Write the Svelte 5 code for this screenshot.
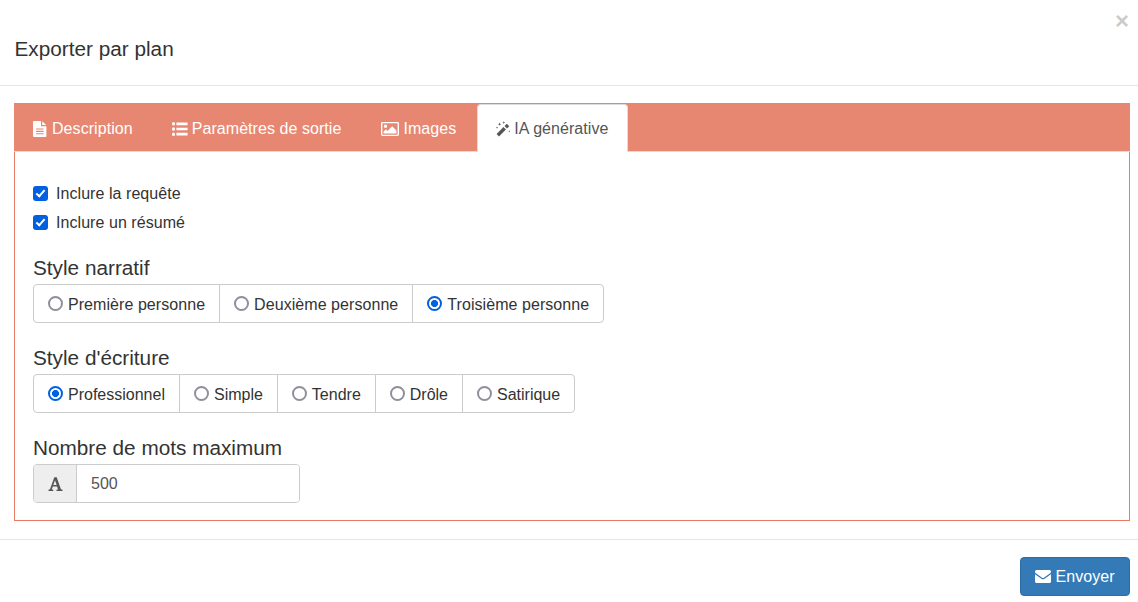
<script>
  const narrative = [
    { label: "Première personne", checked: false },
    { label: "Deuxième personne", checked: false },
    { label: "Troisième personne", checked: true },
  ];
  const writing = [
    { label: "Professionnel", checked: true },
    { label: "Simple", checked: false },
    { label: "Tendre", checked: false },
    { label: "Drôle", checked: false },
    { label: "Satirique", checked: false },
  ];
</script>

<div class="modal">
  <header class="modal-header">
    <span class="close">×</span>
    <h4>Exporter par plan</h4>
  </header>

  <section class="modal-body">
    <nav class="tabs">
      <span class="tab first-tab">
        <svg class="ico" width="14" height="16" viewBox="0 0 14 16">
          <path fill="currentColor" fill-rule="evenodd" d="M1 0h7v5.200h5.400V15a1 1 0 0 1-1 1H1a1 1 0 0 1-1-1V1a1 1 0 0 1 1-1zM9.200 0.300l4 3.800H9.200zM3 7.400v1.100h7.600V7.400zM3 9.800v1.100h7.600V9.800zM3 12.200v1.100h7.600v-1.100z"/>
        </svg>
        Description
      </span>
      <span class="tab">
        <svg class="ico" width="16" height="14" viewBox="0 0 16 14">
          <path fill="currentColor" d="M0 1.500a1.500 1.500 0 0 1 3 0v.4a1.500 1.500 0 0 1-3 0zM0 6.800a1.500 1.500 0 0 1 3 0v.4a1.500 1.500 0 0 1-3 0zM0 12.100a1.500 1.500 0 0 1 3 0v.4a1.500 1.500 0 0 1-3 0zM4.400.6h11.200v2.600H4.400zM4.400 5.700h11.200v2.600H4.400zM4.400 10.800h11.200v2.600H4.400z"/>
        </svg>
        Paramètres de sortie
      </span>
      <span class="tab">
        <svg class="ico" width="18" height="14" viewBox="0 0 18 14">
          <path fill="currentColor" fill-rule="evenodd" d="M1.400 0h15.200A1.400 1.400 0 0 1 18 1.400v11.200a1.400 1.400 0 0 1-1.400 1.400H1.400A1.400 1.400 0 0 1 0 12.600V1.400A1.400 1.400 0 0 1 1.400 0zM1.400 1.200v11.600h15.200V1.200zM4.500 2.600a1.700 1.700 0 1 1 0 3.400 1.700 1.700 0 0 1 0-3.400zM2.600 11.400V9.600l2.300-2.300 1.600 1.600 4.700-4.700 4.200 4.200v3z"/>
        </svg>
        Images
      </span>
      <span class="tab active">
        <svg class="ico" width="16" height="16" viewBox="0 0 16 16">
          <path stroke="currentColor" stroke-width="3.400" d="M2.800 14.200L9.700 7.300"/>
          <path stroke="currentColor" stroke-width="3.400" d="M10.800 6.200L13 4"/>
          <path fill="currentColor" d="M4.600 1.600l.5 1.100 1.100.5-1.100.5-.5 1.100-.5-1.100-1.100-.5 1.100-.5zM8.800.2l.4 1 1 .4-1 .4-.4 1-.4-1-1-.4 1-.4zM2 5.500l.3.800.8.300-.8.300-.3.800-.3-.8-.8-.3.800-.3zM14.300 9.200l.3.800.8.300-.8.300-.3.800-.3-.8-.8-.3.800-.3z"/>
        </svg>
        IA générative
      </span>
    </nav>

    <div class="tab-content">
      <label class="check"><input type="checkbox" checked /> Inclure la requête</label>
      <label class="check"><input type="checkbox" checked /> Inclure un résumé</label>

      <div class="group first">
        <div class="group-title">Style narratif</div>
        <div class="radio-group">
          {#each narrative as item}
            <label class="radio"><input type="radio" name="narrative" checked={item.checked} /> {item.label}</label>
          {/each}
        </div>
      </div>

      <div class="group">
        <div class="group-title">Style d'écriture</div>
        <div class="radio-group tight">
          {#each writing as item}
            <label class="radio"><input type="radio" name="writing" checked={item.checked} /> {item.label}</label>
          {/each}
        </div>
      </div>

      <div class="group">
        <div class="group-title">Nombre de mots maximum</div>
        <div class="input-group">
          <span class="addon">
            <svg width="15" height="14" viewBox="0 0 15 14">
              <path fill="#555" fill-rule="evenodd" d="M6.300.3h2.400l4.200 12 1.600.5V14H8.500V12.800l1.500-.4-.9-2.800H4.800l-1 2.800 1.500.4V14H.5V12.800l1.500-.5zM7 3.300L5.300 8.100h3.400z"/>
            </svg>
          </span>
          <input class="text" type="text" value="500" />
        </div>
      </div>
    </div>
  </section>

  <footer class="modal-footer">
    <button class="send">
      <svg width="16" height="13" viewBox="0 0 16 13">
        <path fill="currentColor" d="M1.500 0h13A1.500 1.500 0 0 1 16 1.500c0 .9-.6 1.600-1.200 2.100L8.900 7.700a1.600 1.600 0 0 1-1.800 0L1.200 3.600C.6 3.100 0 2.400 0 1.500A1.500 1.500 0 0 1 1.500 0zM0 4.200l6.400 4.500c1 .7 2.200.7 3.200 0L16 4.200v7.300a1.500 1.500 0 0 1-1.500 1.500h-13A1.500 1.500 0 0 1 0 11.500z"/>
      </svg>
      Envoyer
    </button>
  </footer>
</div>

<style>
  :global(body) {
    margin: 0;
    background: #fff;
    font-family: "Liberation Sans", Arial, sans-serif;
    font-size: 16px;
    letter-spacing: 0.06px;
    color: #333;
  }
  .modal {
    width: 1138px;
    height: 602px;
    overflow: hidden;
  }
  .modal-header {
    height: 85px;
    border-bottom: 1px solid #e5e5e5;
    padding: 0 15px 0 14.5px;
    position: relative;
  }
  .modal-header h4 {
    margin: 0;
    padding-top: 37px;
    font-size: 20.75px;
    font-weight: 400;
    line-height: 23px;
    letter-spacing: 0;
    color: #333;
  }
  .close {
    position: absolute;
    top: 8px;
    right: 9px;
    font-size: 24px;
    line-height: 26px;
    font-weight: 700;
    color: #000;
    opacity: 0.2;
  }
  .modal-body {
    padding: 17px 8px 18px 14px;
  }
  .tabs {
    display: flex;
    gap: 2px;
    height: 49px;
    background: #e78771;
    padding-top: 1px;
    box-sizing: border-box;
    border-bottom: 1px solid #ddd;
  }
  .tab {
    display: flex;
    align-items: center;
    gap: 4px;
    padding: 2px 19px 0;
    height: 47px;
    color: #fff;
    box-sizing: border-box;
    white-space: nowrap;
  }
  .first-tab {
    gap: 5px;
    padding-right: 18px;
  }
  .tab.active {
    background: #fff;
    color: #555;
    border: 1px solid #ddd;
    border-bottom: 0;
    border-radius: 4px 4px 0 0;
    height: 48px;
    padding: 0 19px 0 17px;
    gap: 3px;
  }
  .ico {
    flex: none;
  }
  .tab-content {
    border: 1px solid #e67a62;
    border-top: 0;
    padding: 27px 18px 17px;
    height: 369px;
    box-sizing: border-box;
  }
  .check {
    display: flex;
    align-items: center;
    height: 29px;
    gap: 8px;
  }
  .check input {
    appearance: none;
    position: relative;
    width: 15px;
    height: 15px;
    margin: 0;
    border-radius: 3px;
    background: #0060df;
  }
  .check input::after {
    content: "";
    position: absolute;
    left: 5px;
    top: 2px;
    width: 3px;
    height: 7px;
    border: solid #fff;
    border-width: 0 2px 2px 0;
    transform: rotate(42deg);
  }
  .group {
    margin-top: 24px;
  }
  .group.first {
    margin-top: 20px;
  }
  .group-title {
    font-size: 20.75px;
    line-height: 22px;
    letter-spacing: 0;
    margin-bottom: 5px;
  }
  .radio-group {
    display: inline-flex;
    height: 39px;
    box-sizing: border-box;
    border: 1px solid #ccc;
    border-radius: 4px;
    vertical-align: top;
  }
  .tight {
    letter-spacing: 0;
  }
  .radio {
    display: flex;
    align-items: center;
    gap: 5px;
    padding: 2px 14px 0;
    border-left: 1px solid #ccc;
  }
  .radio:first-child {
    border-left: 0;
  }
  .radio input {
    appearance: none;
    box-sizing: border-box;
    width: 15px;
    height: 15px;
    margin: -2px 0 0;
    border: 2px solid #8f8f9d;
    border-radius: 50%;
    background: #fff;
  }
  .radio input:checked {
    border-color: #0060df;
    background: radial-gradient(circle, #0060df 0 3.2px, #fff 3.8px);
  }
  .input-group {
    display: flex;
    width: 267px;
    height: 39px;
    box-sizing: border-box;
    border: 1px solid #ccc;
    border-radius: 4px;
    overflow: hidden;
  }
  .addon {
    width: 43px;
    box-sizing: border-box;
    background: #eee;
    border-right: 1px solid #ccc;
    display: flex;
    align-items: center;
    justify-content: center;
    flex: none;
  }
  .text {
    flex: 1;
    min-width: 0;
    border: 0;
    outline: 0;
    padding: 0 14px;
    font: inherit;
    color: #555;
  }
  .modal-footer {
    border-top: 1px solid #e5e5e5;
    padding: 17px 8px 0 0;
    display: flex;
    justify-content: flex-end;
  }
  .send {
    width: 110px;
    height: 39px;
    background: #337ab7;
    border: 1px solid #2e6da4;
    border-radius: 4px;
    color: #fff;
    font: inherit;
    letter-spacing: inherit;
    display: flex;
    align-items: center;
    justify-content: center;
    gap: 4px;
    padding: 0;
  }
</style>
